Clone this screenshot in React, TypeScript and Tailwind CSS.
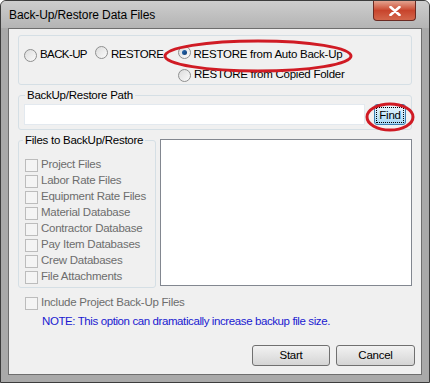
import React from "react";

const Radio = ({ checked }: { checked?: boolean }) => (
  <span className="relative inline-block w-[13px] h-[13px] rounded-full border border-[#8e8f8f] bg-gradient-to-br from-[#dcdcdc] to-[#fbfbfb] shrink-0">
    {checked && (
      <span className="absolute left-[3px] top-[3px] w-[5px] h-[5px] rounded-full bg-gradient-to-br from-[#2a6db5] to-[#0c3a72]" />
    )}
  </span>
);

const Check = () => (
  <span className="inline-block w-[13px] h-[13px] border border-[#bcbcbc] bg-[#f4f4f4] shrink-0" />
);

const files = [
  "Project Files",
  "Labor Rate Files",
  "Equipment Rate Files",
  "Material Database",
  "Contractor Database",
  "Pay Item Databases",
  "Crew Databases",
  "File Attachments",
];

export default function App() {
  return (
    <div
      className="w-[430px] h-[383px] bg-[#a9a9a9] border border-[#3c3c3c] rounded-t-[6px] flex flex-col text-[11.5px] tracking-[-0.25px] text-black relative overflow-hidden"
      style={{ fontFamily: "'Liberation Sans', Arial, sans-serif" }}
    >
      {/* title bar */}
      <div className="h-[27px] flex items-start pl-[8px] pt-[6px] relative bg-gradient-to-b from-[#cdcdcd] to-[#b4b4b4]">
        <span className="text-[12px] leading-[16px] tracking-[-0.1px] text-black">Back-Up/Restore Data Files</span>
        <div className="absolute right-[13px] top-[0px] w-[43px] h-[20px] rounded-b-[4px] border border-[#6b2a22] border-t-0 bg-gradient-to-b from-[#e2a28f] via-[#c8442c] to-[#d3664b] flex items-center justify-center">
          <svg width="12" height="10" viewBox="0 0 12 10">
            <path d="M1.5 1 L10.5 9 M10.5 1 L1.5 9" stroke="#ffffff" strokeWidth="2.6" strokeLinecap="round" />
          </svg>
        </div>
      </div>
      {/* client */}
      <div className="flex-1 mx-[7px] mb-[7px] border border-[#6e6e6e] bg-[#f0f0f0] flex flex-col px-[9px] pt-[6px] relative">
        {/* group 1 */}
        <div className="h-[50px] border border-[#d5dfe5] rounded-[3px] flex flex-col pl-[5px] pt-[11px]">
          <div className="flex items-center h-[16px]">
            <Radio />
            <span className="ml-[3px] tracking-[-0.6px]">BACK-UP</span>
            <span className="ml-[8px]"><Radio /></span>
            <span className="ml-[3px] tracking-[-0.4px]">RESTORE</span>
            <span className="ml-[14px]"><Radio checked /></span>
            <span className="ml-[3px]">RESTORE from Auto Back-Up</span>
          </div>
          <div className="flex items-center h-[16px] mt-[4px] pl-[154px]">
            <Radio />
            <span className="ml-[3px]">RESTORE from Copied Folder</span>
          </div>
        </div>
        {/* group 2 */}
        <div className="mt-[10px] h-[35px] border border-[#d5dfe5] rounded-[3px] relative flex items-center px-[5px] pt-[4px]">
          <span className="absolute left-[6px] top-[-9px] bg-[#f0f0f0] px-[2px] leading-[16px]">BackUp/Restore Path</span>
          <div className="flex-1 h-[21px] bg-white border border-[#e3e9ef]" />
          <div className="ml-[9px] w-[32px] h-[21px] border border-[#3c7fb1] rounded-[3px] bg-gradient-to-b from-[#eaf6fd] to-[#a7d9f5] flex items-center justify-center">
            <span className="border border-dotted border-black px-[2px] leading-[14px]">Find</span>
          </div>
        </div>
        {/* group 3 */}
        <div className="mt-[10px] flex">
          <div className="w-[138px] h-[148px] border border-[#d5dfe5] rounded-[3px] relative pt-[16px] pl-[6px]">
            <span className="absolute left-[4px] top-[-9px] bg-[#f0f0f0] px-[2px] leading-[16px] whitespace-nowrap">Files to BackUp/Restore</span>
            {files.map((f) => (
              <div key={f} className="flex items-center h-[16px] text-[#6d6d6d] whitespace-nowrap">
                <Check />
                <span className="ml-[3px]">{f}</span>
              </div>
            ))}
          </div>
          <div className="ml-[4px] flex-1 h-[147px] mt-[-1px] bg-white border border-[#828790]" />
        </div>
        <div className="flex items-center h-[16px] mt-[7px] pl-[7px] text-[#6d6d6d]">
          <Check />
          <span className="ml-[3px]">Include Project Back-Up Files</span>
        </div>
        <div className="pl-[24px] mt-[2px] leading-[16px] text-[#1a1ad0] tracking-[-0.4px]">
          NOTE: This option can dramatically increase backup file size.
        </div>
        <div className="flex justify-end mt-[16px] gap-[6px] mr-[-3px]">
          <div className="w-[78px] h-[21px] border border-[#707070] rounded-[3px] bg-gradient-to-b from-[#f2f2f2] to-[#d5d5d5] flex items-center justify-center">Start</div>
          <div className="w-[79px] h-[21px] border border-[#707070] rounded-[3px] bg-gradient-to-b from-[#f2f2f2] to-[#d5d5d5] flex items-center justify-center">Cancel</div>
        </div>
      </div>
      {/* red annotation ellipses */}
      <svg className="absolute left-0 top-0 pointer-events-none" width="430" height="383">
        <ellipse cx="257" cy="55" rx="93" ry="15" fill="none" stroke="#d01b24" strokeWidth="3" />
        <ellipse cx="389" cy="116" rx="23" ry="13" fill="none" stroke="#d01b24" strokeWidth="3" />
      </svg>
    </div>
  );
}
